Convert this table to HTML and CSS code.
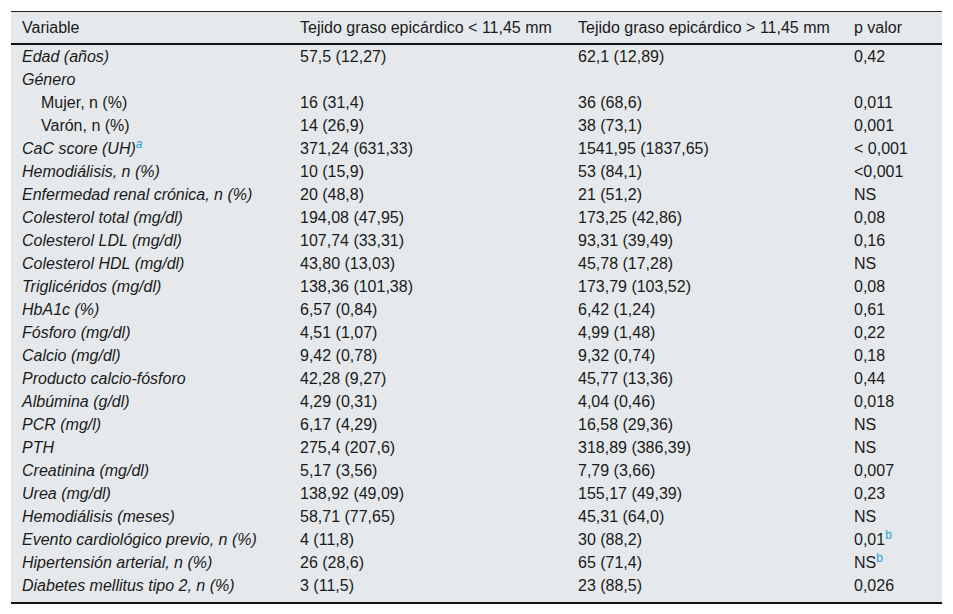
FILE: index.html
```html
<!DOCTYPE html>
<html lang="es">
<head>
<meta charset="utf-8">
<link rel="stylesheet" href="styles.css">
</head>
<body>
<table class="data">
<colgroup><col class="c1"><col class="c2"><col class="c3"><col class="c4"></colgroup>
<thead>
<tr><th>Variable</th><th>Tejido graso epicárdico &lt; 11,45 mm</th><th>Tejido graso epicárdico &gt; 11,45 mm</th><th>p valor</th></tr>
</thead>
<tbody>
<tr><td class="v">Edad (años)</td><td>57,5 (12,27)</td><td>62,1 (12,89)</td><td>0,42</td></tr>
<tr><td class="v">Género</td><td></td><td></td><td></td></tr>
<tr><td class="sub">Mujer, n (%)</td><td>16 (31,4)</td><td>36 (68,6)</td><td>0,011</td></tr>
<tr><td class="sub">Varón, n (%)</td><td>14 (26,9)</td><td>38 (73,1)</td><td>0,001</td></tr>
<tr><td class="v">CaC score (UH)<sup class="ref">a</sup></td><td>371,24 (631,33)</td><td>1541,95 (1837,65)</td><td>&lt; 0,001</td></tr>
<tr><td class="v">Hemodiálisis, n (%)</td><td>10 (15,9)</td><td>53 (84,1)</td><td>&lt;0,001</td></tr>
<tr><td class="v">Enfermedad renal crónica, n (%)</td><td>20 (48,8)</td><td>21 (51,2)</td><td>NS</td></tr>
<tr><td class="v">Colesterol total (mg/dl)</td><td>194,08 (47,95)</td><td>173,25 (42,86)</td><td>0,08</td></tr>
<tr><td class="v">Colesterol LDL (mg/dl)</td><td>107,74 (33,31)</td><td>93,31 (39,49)</td><td>0,16</td></tr>
<tr><td class="v">Colesterol HDL (mg/dl)</td><td>43,80 (13,03)</td><td>45,78 (17,28)</td><td>NS</td></tr>
<tr><td class="v">Triglicéridos (mg/dl)</td><td>138,36 (101,38)</td><td>173,79 (103,52)</td><td>0,08</td></tr>
<tr><td class="v">HbA1c (%)</td><td>6,57 (0,84)</td><td>6,42 (1,24)</td><td>0,61</td></tr>
<tr><td class="v">Fósforo (mg/dl)</td><td>4,51 (1,07)</td><td>4,99 (1,48)</td><td>0,22</td></tr>
<tr><td class="v">Calcio (mg/dl)</td><td>9,42 (0,78)</td><td>9,32 (0,74)</td><td>0,18</td></tr>
<tr><td class="v">Producto calcio-fósforo</td><td>42,28 (9,27)</td><td>45,77 (13,36)</td><td>0,44</td></tr>
<tr><td class="v">Albúmina (g/dl)</td><td>4,29 (0,31)</td><td>4,04 (0,46)</td><td>0,018</td></tr>
<tr><td class="v">PCR (mg/l)</td><td>6,17 (4,29)</td><td>16,58 (29,36)</td><td>NS</td></tr>
<tr><td class="v">PTH</td><td>275,4 (207,6)</td><td>318,89 (386,39)</td><td>NS</td></tr>
<tr><td class="v">Creatinina (mg/dl)</td><td>5,17 (3,56)</td><td>7,79 (3,66)</td><td>0,007</td></tr>
<tr><td class="v">Urea (mg/dl)</td><td>138,92 (49,09)</td><td>155,17 (49,39)</td><td>0,23</td></tr>
<tr><td class="v">Hemodiálisis (meses)</td><td>58,71 (77,65)</td><td>45,31 (64,0)</td><td>NS</td></tr>
<tr><td class="v">Evento cardiológico previo, n (%)</td><td>4 (11,8)</td><td>30 (88,2)</td><td>0,01<sup class="ref">b</sup></td></tr>
<tr><td class="v">Hipertensión arterial, n (%)</td><td>26 (28,6)</td><td>65 (71,4)</td><td>NS<sup class="ref">b</sup></td></tr>
<tr><td class="v">Diabetes mellitus tipo 2, n (%)</td><td>3 (11,5)</td><td>23 (88,5)</td><td>0,026</td></tr>
</tbody>
</table>
</body>
</html>
```
FILE: styles.css
```css
html, body {
  margin: 0;
  padding: 0;
  background: #ffffff;
}
body {
  padding: 11px 11px 0 11px;
  font-family: "Liberation Sans", Arial, sans-serif;
  font-size: 16px;
  color: #1a1a1a;
}
.data {
  width: 931px;
  border-collapse: collapse;
  table-layout: fixed;
  background: #e5e9ec;
  border-top: 1px solid #222;
  border-bottom: 2px solid #111;
}
.c1 { width: 278px; }
.c2 { width: 278px; }
.c3 { width: 276px; }
.c4 { width: 99px; }
.data th {
  font-weight: normal;
  text-align: left;
  padding: 1px 11px 0 11px;
  height: 30px;
  border-bottom: 2px solid #111;
  vertical-align: middle;
}
.data td {
  padding: 1px 11px 0 11px;
  height: 22px;
  line-height: 18px;
  vertical-align: middle;
  white-space: nowrap;
}
.data tbody tr:last-child td {
  height: 25px;
  vertical-align: top;
  padding-top: 3px;
}
.data td.v {
  font-style: italic;
}
.data td.sub {
  padding-left: 30px;
}
.ref {
  color: #2a9fd8;
  font-size: 12px;
  line-height: 0;
  vertical-align: 6px;
}
```
